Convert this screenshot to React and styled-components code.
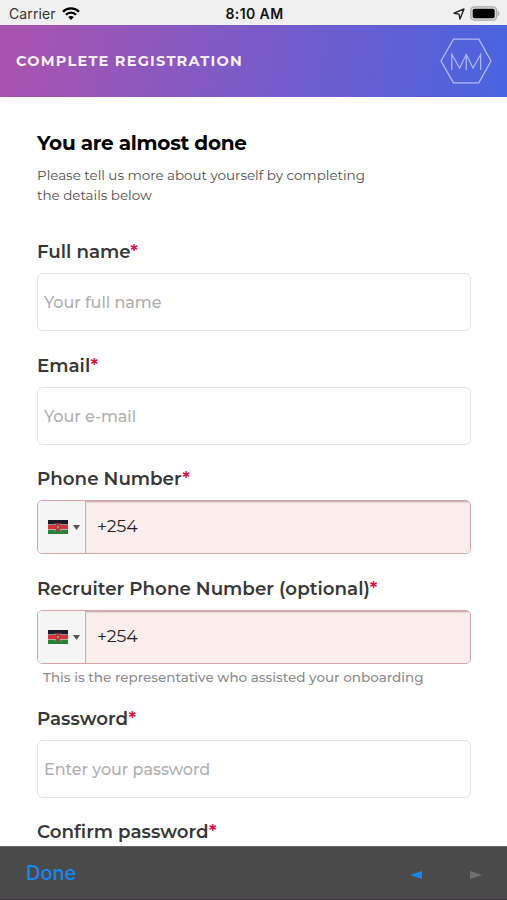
import React from 'react';
import styled, { createGlobalStyle } from 'styled-components';

const GlobalStyle = createGlobalStyle`
  * {
    box-sizing: border-box;
  }
  body {
    margin: 0;
    background: #fff;
    font-family: Montserrat, Inter, "Liberation Sans", sans-serif;
  }
`;

const Screen = styled.div`
  display: flex;
  flex-direction: column;
  width: 507px;
  height: 900px;
  overflow: hidden;
  background: #fff;
`;

const StatusBar = styled.div`
  display: grid;
  grid-template-columns: 1fr auto 1fr;
  align-items: center;
  flex: none;
  height: 25px;
  padding: 2px 7px 0 9px;
  background: #f0f0f0;
  color: #111;
  font-family: Inter, sans-serif;
  font-size: 14px;
  line-height: 22px;
`;

const StatusGroup = styled.div`
  display: flex;
  align-items: center;
  gap: ${(props) => props.$gap};
  justify-content: ${(props) => props.$align || 'flex-start'};
`;

const Carrier = styled.span`
  color: #333;
  letter-spacing: 0.1px;
`;

const Clock = styled.span`
  font-weight: 600;
  letter-spacing: 0.4px;
`;

const Header = styled.header`
  display: flex;
  align-items: center;
  justify-content: space-between;
  flex: none;
  height: 72px;
  padding: 0 15px 0 16px;
  background: linear-gradient(100deg, #ab53ae 0%, #7a5bc8 50%, #4864e0 100%);
`;

const HeaderTitle = styled.h1`
  margin: 0 0 1px;
  color: #f8effb;
  font-size: 14.5px;
  font-weight: 700;
  line-height: 20px;
  letter-spacing: 1.22px;
`;

const Form = styled.form`
  flex: 1;
  min-height: 0;
  overflow: hidden;
  padding: 33px 36px 0 37px;
`;

const Heading = styled.h2`
  margin: 0;
  color: #000;
  font-size: 20px;
  font-weight: 700;
  line-height: 26px;
  letter-spacing: -0.27px;
  white-space: nowrap;
`;

const Intro = styled.p`
  width: 350px;
  margin: 10px 0 32px;
  color: #505050;
  font-size: 13.5px;
  line-height: 19.5px;
  letter-spacing: -0.03px;
  white-space: nowrap;
`;

const FieldBlock = styled.div`
  margin-bottom: ${(props) => props.$space || '20px'};
`;

const Label = styled.label`
  display: block;
  margin-bottom: 7px;
  padding-top: 1px;
  color: #383838;
  font-size: 18.3px;
  font-weight: 600;
  line-height: 28px;
  white-space: nowrap;
`;

const Required = styled.span`
  color: #e0113c;
`;

const Input = styled.input`
  display: block;
  width: 100%;
  height: 58px;
  padding: 0 6px;
  border: 1px solid #e3e3e3;
  border-radius: 6px;
  outline: none;
  background: #fff;
  color: #333;
  font-family: inherit;
  font-size: 16px;
  font-weight: 500;
  letter-spacing: -0.05px;

  &::placeholder {
    color: #b0b0b0;
    opacity: 1;
  }
`;

const PhoneBox = styled.div`
  display: flex;
  height: 54px;
  overflow: hidden;
  border: 1px solid #d9a3a8;
  border-radius: 5px;
`;

const CountryButton = styled.div`
  display: flex;
  align-items: center;
  flex: none;
  gap: 5px;
  width: 48px;
  padding-left: 10px;
  border-right: 1px solid #d9a3a8;
  background: #f5f5f5;
`;

const PhoneInput = styled.input`
  flex: 1;
  min-width: 0;
  padding: 0 11px 3px;
  border: 0;
  outline: none;
  background: #fbefee;
  box-shadow: inset 0 2px 2px -1px #b99da0;
  color: #222;
  font-family: inherit;
  font-size: 17.3px;
  font-weight: 400;
`;

const Helper = styled.div`
  margin: 4px 0 0 6px;
  color: #8d8d8d;
  font-size: 13.5px;
  font-weight: 500;
  line-height: 18px;
  letter-spacing: -0.02px;
  white-space: nowrap;
`;

const Toolbar = styled.div`
  display: flex;
  align-items: center;
  flex: none;
  height: 54px;
  padding: 0 25px 0 26px;
  border-top: 1px solid #6a6a6a;
  border-bottom: 1px solid #3b3038;
  background: #4a4a4a;
`;

const Done = styled.span`
  flex: 1;
  color: #1786f0;
  font-family: Inter, sans-serif;
  font-size: 20px;
  font-weight: 500;
  line-height: 26px;
`;

const Arrows = styled.div`
  display: flex;
  gap: 48px;
  padding-top: 4px;
`;

function WifiIcon() {
  return (
    <svg width="18" height="14" viewBox="0 0 18 14" fill="none" stroke="#000">
      <path d="M1 4.8C5.4 .3 12.6 .3 17 4.8" strokeWidth="2.3" />
      <path d="M3.9 7.8c2.8-2.9 7.4-2.9 10.2 0" strokeWidth="2.2" />
      <path d="M6.2 10.1c1.6-1.6 4-1.6 5.6 0L9 13z" fill="#000" stroke="none" />
    </svg>
  );
}

function LocationIcon() {
  return (
    <svg width="12" height="12" viewBox="0 0 12 12" fill="none" stroke="#222" strokeWidth="1.4" strokeLinejoin="round">
      <path d="M1 5.2 11 1 7 11 6 6.1z" />
    </svg>
  );
}

function BatteryIcon() {
  return (
    <svg width="30" height="15" viewBox="0 0 30 15">
      <rect x=".8" y=".8" width="25.8" height="13.4" rx="3.6" fill="#ddd" stroke="#aaa" strokeWidth="1.3" />
      <rect x="2.7" y="2.7" width="22" height="9.6" rx="1.8" fill="#000" />
      <path d="M27.6 4.8c2.4.9 2.4 4.5 0 5.4z" fill="#aaa" />
    </svg>
  );
}

function Logo() {
  return (
    <svg width="52" height="46" viewBox="0 0 52 46" fill="none" stroke="#b3b9f8" strokeWidth="1.3">
      <path d="M13.5 1.2h25.3L51 23 38.8 44.8H13.5L1 23z" />
      <path d="M11.8 32V16.5l7.8 13.5 6.7-13.5 6.7 13.5 7.7-13.5V32" strokeWidth="1.2" />
      <path d="M26.3 16.5V32" strokeWidth="1.2" />
    </svg>
  );
}

function KenyaFlag() {
  return (
    <svg width="20" height="14" viewBox="0 0 20 14">
      <rect width="20" height="14" fill="#ddd" />
      <rect width="20" height="4.4" fill="#1c1a2a" />
      <rect y="5" width="20" height="4.2" fill="#d6323b" />
      <rect y="9.8" width="20" height="4.2" fill="#278237" />
      <path d="M6.6 2.8l6.8 8.6M13.4 2.8L6.6 11.4" stroke="#c9a9a5" strokeWidth=".5" />
      <ellipse cx="10" cy="7.1" rx="2.4" ry="4.3" fill="#a93b35" />
      <ellipse cx="10" cy="7.1" rx=".7" ry="1.6" fill="#d8aaa0" />
    </svg>
  );
}

function Caret() {
  return (
    <svg width="7" height="5" viewBox="0 0 7 5">
      <path d="M0 0h7L3.5 5z" fill="#555" />
    </svg>
  );
}

function TextField({ id, label, placeholder, type = 'text', space }) {
  return (
    <FieldBlock $space={space}>
      <Label htmlFor={id}>
        {label}<Required>*</Required>
      </Label>
      <Input id={id} type={type} placeholder={placeholder} />
    </FieldBlock>
  );
}

function PhoneField({ id, label, helper, space }) {
  return (
    <FieldBlock $space={space}>
      <Label htmlFor={id}>
        {label}<Required>*</Required>
      </Label>
      <PhoneBox>
        <CountryButton>
          <KenyaFlag />
          <Caret />
        </CountryButton>
        <PhoneInput id={id} type="tel" defaultValue="+254" />
      </PhoneBox>
      {helper && <Helper>{helper}</Helper>}
    </FieldBlock>
  );
}

export default function App() {
  return (
    <Screen>
      <GlobalStyle />
      <StatusBar>
        <StatusGroup $gap="6px">
          <Carrier>Carrier</Carrier>
          <WifiIcon />
        </StatusGroup>
        <Clock>8:10 AM</Clock>
        <StatusGroup $gap="5px" $align="flex-end">
          <LocationIcon />
          <BatteryIcon />
        </StatusGroup>
      </StatusBar>
      <Header>
        <HeaderTitle>COMPLETE REGISTRATION</HeaderTitle>
        <Logo />
      </Header>
      <Form>
        <Heading>You are almost done</Heading>
        <Intro>
          Please tell us more about yourself by completing
          <br />
          the details below
        </Intro>
        <TextField id="name" label="Full name" placeholder="Your full name" />
        <TextField id="email" label="Email" placeholder="Your e-mail" space="19px" />
        <PhoneField id="phone" label="Phone Number" />
        <PhoneField
          id="recruiter"
          label="Recruiter Phone Number (optional)"
          helper="This is the representative who assisted your onboarding"
          space="18px"
        />
        <TextField id="password" type="password" label="Password" placeholder="Enter your password" space="19px" />
        <TextField id="confirm" type="password" label="Confirm password" placeholder="Confirm your password" />
      </Form>
      <Toolbar>
        <Done>Done</Done>
        <Arrows>
          <svg width="12" height="8" viewBox="0 0 12 8">
            <path d="M12 0v8L0 4z" fill="#1786f0" />
          </svg>
          <svg width="12" height="8" viewBox="0 0 12 8">
            <path d="M0 0v8l12-4z" fill="#707070" />
          </svg>
        </Arrows>
      </Toolbar>
    </Screen>
  );
}
